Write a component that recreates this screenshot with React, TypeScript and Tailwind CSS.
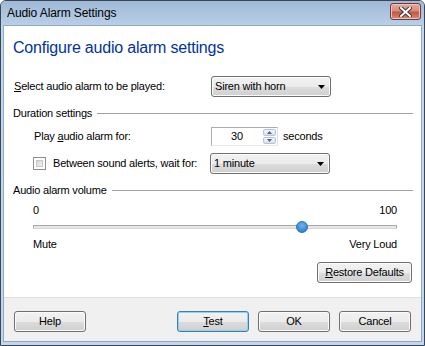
import React from "react";

const font = { fontFamily: '"Liberation Sans", Arial, sans-serif' };
const txt = "text-[11px] leading-none tracking-[-0.2px] whitespace-nowrap";

function Arrow() {
  return (
    <svg width="7" height="4" viewBox="0 0 7 4" className="block">
      <path d="M0 0H7L3.5 4Z" fill="#000" />
    </svg>
  );
}

function Dropdown({ text }: { text: string }) {
  return (
    <div className="w-[120px] h-[21px] rounded-[3px] border border-[#707070] flex items-center justify-between pl-[3px] pr-[5px] bg-[linear-gradient(#f2f2f2_0%,#ebebeb_50%,#dddddd_51%,#cfcfcf_100%)] shadow-[inset_0_0_0_1px_#fcfcfc]">
      <span className={txt}>{text}</span>
      <Arrow />
    </div>
  );
}

function Button({ children, focused, w = "w-[72px]" }: { children: React.ReactNode; focused?: boolean; w?: string }) {
  return (
    <div
      className={`${w} h-[21px] rounded-[3px] border flex items-center justify-center ${txt} ${
        focused
          ? "border-[#3c7fb1] shadow-[inset_0_0_0_1px_#92d1f0] bg-[linear-gradient(#f2f2f2_0%,#ebebeb_50%,#dddddd_51%,#cfcfcf_100%)]"
          : "border-[#707070] shadow-[inset_0_0_0_1px_#fbfbfb] bg-[linear-gradient(#f2f2f2_0%,#ebebeb_50%,#dddddd_51%,#cfcfcf_100%)]"
      }`}
    >
      {children}
    </div>
  );
}

function GroupHeader({ text }: { text: string }) {
  return (
    <div className="flex items-center h-[14px]">
      <span className={txt}>{text}</span>
      <div className="flex-1 ml-[5px] h-px bg-[#a0a0a0]" />
    </div>
  );
}

export default function App() {
  return (
    <div style={font} className="w-[425px] h-[346px] text-black">
      <div className="w-[425px] h-[346px] border border-[#3a4656] rounded-t-[6px] bg-[#c2d6ec] flex flex-col overflow-hidden">
        {/* Title bar */}
        <div className="h-[24px] flex items-center justify-between pl-[6px] pr-[3px] bg-[linear-gradient(#9fb9d6,#b9cfe8)]">
          <span className="text-[12px] leading-none tracking-[-0.1px] text-black">Audio Alarm Settings</span>
          <div className="w-[31px] h-[17px] mt-[-3px] rounded-[3px] border border-[#6b3a3a] bg-[linear-gradient(#e6a89e_0%,#d98a7c_45%,#c4563f_55%,#d98a7c_100%)] flex items-center justify-center shadow-[inset_0_0_0_1px_#f0c2ba]">
            <svg width="13" height="10" viewBox="0 0 13 10">
              <path d="M2 1L11 9M11 1L2 9" stroke="#3a3a3a" strokeWidth="4" strokeLinecap="square" />
              <path d="M2 1L11 9M11 1L2 9" stroke="#ffffff" strokeWidth="2" strokeLinecap="square" />
            </svg>
          </div>
        </div>
        {/* Client */}
        <div className="flex-1 mx-[2px] mb-[3px] border border-[#8ea9c7] flex flex-col bg-white">
          <div className="flex-1 flex flex-col pl-[9px] pr-[8px]">
            <div className="mt-[12px] text-[16px] leading-[20px] tracking-[-0.2px] text-[#0033a0]">Configure audio alarm settings</div>
            {/* Row 1 */}
            <div className="mt-[18px] flex items-center h-[21px] pl-[1px]">
              <span className={`w-[197px] ${txt}`}>
                <span className="underline">S</span>elect audio alarm to be played:
              </span>
              <Dropdown text="Siren with horn" />
            </div>
            <div className="mt-[9px]">
              <GroupHeader text="Duration settings" />
            </div>
            {/* Play row */}
            <div className="mt-[7px] flex items-center h-[19px] pl-[21px]">
              <span className={`w-[177px] ${txt}`}>
                Play <span className="underline">a</span>udio alarm for:
              </span>
              <div className="w-[67px] h-[19px] border border-[#abadb3] border-b-[#e3e9ef] border-r-[#dbdfe6] flex items-stretch">
                <div className={`flex-1 flex items-center justify-center ${txt}`}>30</div>
                <div className="w-[15px] flex flex-col p-[1px] gap-[1px]">
                  <div className="flex-1 rounded-[2px] border border-[#b8c4d4] bg-[linear-gradient(#f3f6fa,#d9e1ec)] flex items-center justify-center">
                    <svg width="5" height="3" viewBox="0 0 5 3"><path d="M0 3H5L2.5 0Z" fill="#4d6185" /></svg>
                  </div>
                  <div className="flex-1 rounded-[2px] border border-[#b8c4d4] bg-[linear-gradient(#f3f6fa,#d9e1ec)] flex items-center justify-center">
                    <svg width="5" height="3" viewBox="0 0 5 3"><path d="M0 0H5L2.5 3Z" fill="#4d6185" /></svg>
                  </div>
                </div>
              </div>
              <span className={`ml-[5px] ${txt}`}>seconds</span>
            </div>
            {/* Checkbox row */}
            <div className="mt-[7px] flex items-center h-[21px] pl-[20px]">
              <div className="w-[13px] h-[13px] border border-[#8f8f8f] bg-white p-[2px]">
                <div className="w-full h-full border border-[#c7c7c7] bg-[linear-gradient(135deg,#d4d4d4,#f4f4f4)]" />
              </div>
              <span className={`w-[164px] pl-[7px] ${txt}`}>Between sound alerts, wait for:</span>
              <Dropdown text="1 minute" />
            </div>
            <div className="mt-[9px]">
              <GroupHeader text="Audio alarm volume" />
            </div>
            {/* Slider */}
            <div className="pl-[20px] pr-[16px] flex flex-col">
              <div className={`mt-[6px] flex justify-between h-[14px] items-center ${txt}`}>
                <span>0</span>
                <span>100</span>
              </div>
              <div className="mt-[4px] h-[12px] relative flex items-center">
                <div className="w-full h-[4px] rounded-[1px] border border-[#a8a8a8] bg-[#e6e6e6] border-b-[#d6d6d6]" />
                <div className="absolute left-[263px] top-0 w-[12px] h-[12px] rounded-full border border-[#2a73c0] bg-[radial-gradient(circle_at_50%_35%,#6fb4ee,#3685d6_70%)]" />
              </div>
              <div className={`mt-[4px] flex justify-between h-[14px] items-center ${txt}`}>
                <span>Mute</span>
                <span>Very Loud</span>
              </div>
            </div>
            <div className="mt-[11px] flex justify-end pr-[1px]">
              <Button w="w-[95px]">
                <span>
                  <span className="underline">R</span>estore Defaults
                </span>
              </Button>
            </div>
          </div>
          {/* Bottom bar */}
          <div className="h-[44px] border-t border-[#dfdfdf] bg-[#f0f0f0] flex items-start pt-[13px] pl-[10px] pr-[10px]">
            <Button>Help</Button>
            <div className="flex-1" />
            <Button focused>
              <span>
                <span className="underline">T</span>est
              </span>
            </Button>
            <div className="w-[9px]" />
            <Button>OK</Button>
            <div className="w-[9px]" />
            <Button>Cancel</Button>
          </div>
        </div>
      </div>
    </div>
  );
}
